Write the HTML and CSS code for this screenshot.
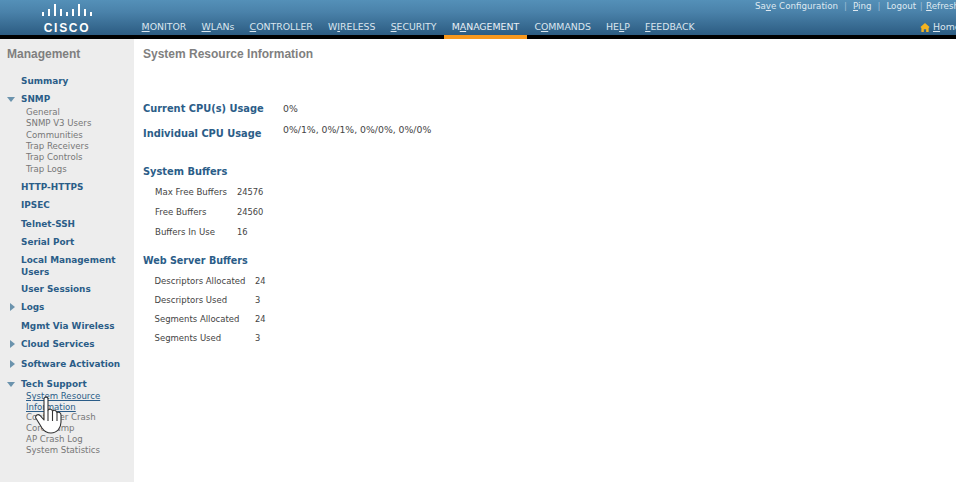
FILE: index.html
```html
<!DOCTYPE html>
<html lang="en">
<head>
<meta charset="utf-8">
<title>System Resource Information</title>
<link rel="stylesheet" href="styles.css">
</head>
<body>
<header class="top">
  <div class="logo">
    <svg class="bars" width="52" height="13" viewBox="0 0 52 13"><g fill="#fff"><rect x="1" y="8" width="2" height="4"/><rect x="7" y="5" width="2" height="7"/><rect x="13" y="0" width="2" height="12"/><rect x="19" y="5" width="2" height="7"/><rect x="25" y="8" width="2" height="4"/><rect x="31" y="5" width="2" height="7"/><rect x="37" y="0" width="2" height="12"/><rect x="43" y="5" width="2" height="7"/><rect x="49" y="8" width="2" height="4"/></g></svg>
    <span class="wordmark">CISCO</span>
  </div>
  <div class="bar-main">
    <div class="utility">
      <span>Sa<u>v</u>e Configuration</span><i>|</i><span><u>P</u>ing</span><i>|</i><span>Logout</span><i class="tight">|</i><span><u>R</u>efresh</span>
    </div>
    <nav class="nav">
      <a><u>M</u>ONITOR</a><a><u>W</u>LANs</a><a><u>C</u>ONTROLLER</a><a>W<u>I</u>RELESS</a><a><u>S</u>ECURITY</a><a class="active">M<u>A</u>NAGEMENT</a><a>C<u>O</u>MMANDS</a><a>HE<u>L</u>P</a><a><u>F</u>EEDBACK</a>
      <span class="home"><svg width="10" height="11" viewBox="0 0 11 11"><path d="M5.500 0.500 10.500 5 9.500 6V10.500H6.800V7.500H4.200V10.500H1.500V6L.5 5Z" fill="#f5b421"/></svg><span><u>H</u>ome</span></span>
    </nav>
  </div>
</header>
<div class="page">
  <aside class="side">
    <h2 class="side-title">Management</h2>
    <ul class="menu">
      <li class="item">Summary</li>
      <li class="item s-tree"><b class="open"></b>SNMP</li>
      <li class="subs"><a>General</a><a>SNMP V3 Users</a><a>Communities</a><a>Trap Receivers</a><a>Trap Controls</a><a>Trap Logs</a></li>
      <li class="item">HTTP-HTTPS</li>
      <li class="item">IPSEC</li>
      <li class="item">Telnet-SSH</li>
      <li class="item">Serial Port</li>
      <li class="item two">Local Management Users</li>
      <li class="item">User Sessions</li>
      <li class="item wide-1"><b class="closed"></b>Logs</li>
      <li class="item">Mgmt Via Wireless</li>
      <li class="item wide-2"><b class="closed"></b>Cloud Services</li>
      <li class="item wide-2"><b class="closed"></b>Software Activation</li>
      <li class="item s-tree s-tight"><b class="open"></b>Tech Support</li>
      <li class="subs subs-tight"><a class="current">System Resource Information</a><a>Controller Crash</a><a>Core Dump</a><a>AP Crash Log</a><a>System Statistics</a></li>
    </ul>
  </aside>
  <main class="content">
    <h1 class="page-title">System Resource Information</h1>
    <div class="usage u1"><h3>Current CPU(s) Usage</h3><span>0%</span></div>
    <div class="usage u2"><h3>Individual CPU Usage</h3><span>0%/1%, 0%/1%, 0%/0%, 0%/0%</span></div>
    <h3 class="section sb">System Buffers</h3>
    <dl class="rows sys">
      <div><dt>Max Free Buffers</dt><dd>24576</dd></div>
      <div><dt>Free Buffers</dt><dd>24560</dd></div>
      <div><dt>Buffers In Use</dt><dd>16</dd></div>
    </dl>
    <h3 class="section sw">Web Server Buffers</h3>
    <dl class="rows web">
      <div><dt>Descriptors Allocated</dt><dd>24</dd></div>
      <div><dt>Descriptors Used</dt><dd>3</dd></div>
      <div><dt>Segments Allocated</dt><dd>24</dd></div>
      <div><dt>Segments Used</dt><dd>3</dd></div>
    </dl>
  </main>
</div>
<svg class="cursor" width="28" height="38" viewBox="0 0 28 38"><path d="M9 3C9 .5 13 .5 13 3V14C14.500 12.500 17 13 17.500 15C19 13.500 21.500 14.500 22 16.500C23.500 15.500 26 16.500 26 19V26C26 32 22 37 16 37C11 37 9 35 7 32L.8 22C0 19.500 3 17.500 5 19.500L9 24Z" fill="#fff" stroke="#333" stroke-width="1.100" stroke-linejoin="round"/><path d="M13 14V25M17.500 15V25M22 16.500V25" stroke="#333" stroke-width="1.100" fill="none"/></svg>
</body>
</html>
```
FILE: styles.css
```css
* { box-sizing: border-box; }
html, body { margin: 0; padding: 0; }
body { width: 956px; height: 482px; overflow: hidden; background: #fff; font-family: "DejaVu Sans", Verdana, sans-serif; position: relative; }
ul, dl, dd, h1, h2, h3 { margin: 0; padding: 0; }
ul { list-style: none; }

.top { height: 39px; display: flex; overflow: hidden; background: linear-gradient(#5490b8 0, #4a82aa 12px, #2c5c82 35px, #000 35px); }
.logo { width: 134px; flex: none; display: flex; flex-direction: column; align-items: center; padding-top: 4px; }
.bars { display: block; height: 13px; width: 52px; margin-left: -1px; }
.wordmark { font: bold 12px/12px "Liberation Sans", sans-serif; letter-spacing: 1.700px; color: #fff; margin-top: 5px; }
.bar-main { flex: 1; display: flex; flex-direction: column; min-width: 0; }
.utility { height: 17px; display: flex; padding-left: 621px; white-space: nowrap; font-size: 8.700px; line-height: 13px; color: #dfe9f1; }
.utility i { font-style: normal; margin: 0 6px; color: #9fbdd3; }
.utility i.tight { margin: 0 3.500px; }
.nav { display: flex; height: 22px; font: 9.350px/20px "DejaVu Sans", sans-serif; color: #dbe6ef; position: relative; white-space: nowrap; }
.nav a { padding: 0 7.600px; height: 22px; border-bottom: 4px solid transparent; }
.nav a.active { border-bottom-color: #f7981d; color: #e9f0f6; }
.home { position: absolute; left: 786px; top: 0; display: flex; align-items: center; gap: 3px; height: 20px; }

.page { display: flex; height: 443px; }
.side { width: 134px; flex: none; background: #ededed; padding: 8px 0 0 7px; }
.side-title { font: bold 12px/14px "Liberation Sans", sans-serif; color: #7f7f7f; }
.menu { margin-top: 14px; }
.item { position: relative; font-size: 8.900px; font-weight: bold; line-height: 12px; color: #2b5d88; padding-left: 14px; margin-bottom: 6.200px; }
.s-tree { margin-bottom: 1.500px; }
.s-tree.s-tight { margin-bottom: 1px; }
.wide-1 { margin-bottom: 7px; }
.wide-2 { margin-bottom: 8px; }
.item.two { padding-right: 8px; margin-bottom: 5px; }
.open, .closed { position: absolute; width: 0; height: 0; }
.open { left: 0; top: 4px; border: 4px solid transparent; border-top: 5px solid #6b93ad; border-bottom: 0; }
.closed { left: 3px; top: 2px; border: 4px solid transparent; border-left: 5px solid #6b93ad; border-right: 0; }
.subs { padding-left: 19px; margin-bottom: 6px; font-size: 8.600px; line-height: 11.400px; color: #777; }
.subs a { display: block; }
.subs-tight { line-height: 11px; }
.subs .current { color: #2b5d88; text-decoration: underline; line-height: 10.500px; padding-right: 22px; }

.content { flex: 1; padding: 8px 0 0 9px; min-width: 0; }
.page-title { font: bold 12px/14px "Liberation Sans", sans-serif; color: #7f7f7f; }
.usage { display: flex; align-items: flex-start; }
.usage h3, .section { font-size: 9.850px; font-weight: bold; line-height: 12px; color: #2b5d88; }
.usage h3 { width: 140px; }
.usage span { font-size: 9.300px; line-height: 12px; color: #444; }
.u1 { margin-top: 42px; }
.u2 { margin-top: 13px; }
.u2 span { margin-top: -4px; }
.section.sb { margin-top: 26px; }
.section.sw { margin-top: 8.500px; font-size: 9.600px; }
.rows { padding-left: 12px; font-size: 8.600px; color: #444; }
.rows div { display: flex; }
.rows dt { flex: none; }
.rows dd { font-size: 8.300px; }
.sys { margin-top: 8px; }
.sys div { height: 20px; line-height: 12px; }
.sys dt { width: 82px; }
.web { margin-top: 8px; padding-left: 11.500px; font-size: 8.500px; }
.web div { height: 19px; line-height: 12px; }
.web dt { width: 100.500px; }

.cursor { position: absolute; left: 35px; top: 396px; }
```
